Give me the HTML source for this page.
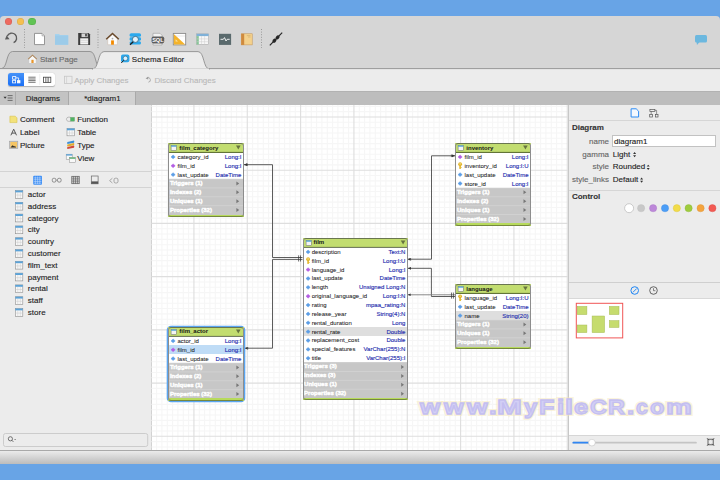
<!DOCTYPE html>
<html><head><meta charset="utf-8">
<style>
*{box-sizing:border-box;margin:0;padding:0}
html,body{width:720px;height:480px;overflow:hidden;background:#68a4e6;font-family:"Liberation Sans",sans-serif;color:#222}
.a{position:absolute}
#win{position:absolute;left:0;top:16px;width:720px;height:448px;background:#d6d6d6;border-radius:4px 4px 1px 1px;overflow:hidden}
.tl{position:absolute;width:7.4px;height:7.4px;border-radius:50%;box-shadow:inset 0 0 0 0.5px rgba(0,0,0,0.12)}
.sep{position:absolute;width:1px;border-left:1px dotted #999}
.t8{font-size:8px;white-space:nowrap;line-height:10px;-webkit-text-stroke:0.12px currentColor}
.tb{background:#fff;border-radius:3px}
.tb:after{content:"";position:absolute;left:0;top:0;right:0;bottom:0;border:0.8px solid #8d8d8d;border-top-color:#6a7650;border-bottom:1px solid #75883f;border-radius:3px}
.th{background:#c2dd70}
.tn{font-size:6px;font-weight:bold;color:#151515;white-space:nowrap}
.tr{font-size:6px;white-space:nowrap}
.fn{position:absolute;left:9.2px;top:0;color:#1a1a1a;-webkit-text-stroke:0.05px #1a1a1a}
.ty{position:absolute;right:2.3px;top:0;color:#2a33b0;-webkit-text-stroke:0.15px #2a33b0}
.tg{background:#c7c7c7;color:#fff;-webkit-text-stroke:0.4px #fff;font-size:6px;font-weight:bold;padding-left:1.6px;white-space:nowrap}
.tf{background:#b7da5c}
.wm{position:absolute;top:394.60px;font-size:21px;line-height:24px;font-weight:bold;white-space:nowrap;color:#d3cff6;-webkit-text-stroke:1.3px #c4bff0;transform-origin:0 0}
.wmh{color:transparent;-webkit-text-stroke:4px rgba(248,232,180,0.45)}
</style></head><body>
<div id="win">
  <!-- traffic lights -->
  <div class="tl" style="left:4.6px;top:2.1px;background:#ee6a5f"></div>
  <div class="tl" style="left:16.5px;top:2.1px;background:#f5bf4f"></div>
  <div class="tl" style="left:28.3px;top:2.1px;background:#61c454"></div>
</div>

<svg class="a" style="left:0;top:0" width="720" height="70" viewBox="0 0 720 70">
 <!-- undo -->
 <path d="M7.2 36.2 A4.9 4.9 0 1 1 13.6 42.6" fill="none" stroke="#5c5c5c" stroke-width="1.4"/>
 <path d="M5 39.6 L9.6 39.2 L6.6 35.4 Z" fill="#5c5c5c"/>
 <!-- separators -->
 <line x1="24.5" y1="29" x2="24.5" y2="48" stroke="#8a8a8a" stroke-width="0.8" stroke-dasharray="1 1.6"/>
 <line x1="98" y1="29" x2="98" y2="48" stroke="#8a8a8a" stroke-width="0.8" stroke-dasharray="1 1.6"/>
 <line x1="261.5" y1="29" x2="261.5" y2="48" stroke="#8a8a8a" stroke-width="0.8" stroke-dasharray="1 1.6"/>
 <!-- new doc -->
 <path d="M34.5 33.4 H42 L44.5 35.9 V44.6 H34.5 Z" fill="#fff" stroke="#8c8c8c" stroke-width="0.9"/>
 <path d="M42 33.4 V35.9 H44.5" fill="#e0e0e0" stroke="#9a9a9a" stroke-width="0.6"/>
 <!-- folder -->
 <path d="M55 34 H59 L60 35 H68.2 V44.7 H55 Z" fill="#a6d3ee"/>
 <rect x="55" y="35.6" width="13.2" height="9.1" fill="#9ccbe9"/>
 <!-- floppy -->
 <path d="M78.2 33 H88.6 L90.1 34.5 V45 H78.2 Z" fill="#3b3b3b"/>
 <rect x="81.5" y="33.4" width="6.2" height="3.7" fill="#d4d4d4"/>
 <rect x="85.2" y="33.8" width="1.6" height="2.6" fill="#3b3b3b"/>
 <rect x="80.2" y="38.3" width="8" height="6.2" fill="#f4f4f4"/>
 <line x1="80.2" y1="40.3" x2="88.2" y2="40.3" stroke="#bbb" stroke-width="0.5"/>
 <line x1="80.2" y1="42.3" x2="88.2" y2="42.3" stroke="#bbb" stroke-width="0.5"/>
 <!-- house -->
 <path d="M107.7 38.6 V44.7 H117.4 V38.6 L112.5 34.4 Z" fill="#fbfbfb" stroke="#c8b9a8" stroke-width="0.5"/>
 <path d="M106.2 39.2 L112.5 33.4 L118.8 39.2" fill="none" stroke="#6a4a2c" stroke-width="1.5"/>
 <circle cx="112.5" cy="38.6" r="0.9" fill="#aaa"/>
 <rect x="111.1" y="40.4" width="2.8" height="4.3" fill="#f28a00"/>
 <!-- db search -->
 <rect x="129.6" y="33.2" width="11.4" height="3.6" rx="1.6" fill="#2aa9ee"/>
 <rect x="129.6" y="37.3" width="11.4" height="3.4" rx="1.4" fill="#2aa9ee"/>
 <rect x="129.6" y="41.2" width="11.4" height="3.4" rx="1.6" fill="#2aa9ee"/>
 <circle cx="135.4" cy="39.4" r="3" fill="#e4f3fc" stroke="#27536e" stroke-width="0.7"/>
 <line x1="133.2" y1="41.7" x2="130" y2="44.8" stroke="#1e1e1e" stroke-width="1.3"/>
 <!-- sql -->
 <path d="M153 33.3 H160 L162 35.3 V45 H153 Z" fill="#f2f2f2" stroke="#9a9a9a" stroke-width="0.6"/>
 <rect x="151.6" y="36.4" width="12.6" height="7" rx="1.8" fill="#5d5d5d"/>
 <text x="157.9" y="42.2" font-size="5.6" font-family="Liberation Sans" font-weight="bold" fill="#fff" text-anchor="middle">SQL</text>
 <!-- ruler -->
 <rect x="173.3" y="33.4" width="12.4" height="11.5" fill="#fff" stroke="#8a8a8a" stroke-width="0.9"/>
 <line x1="174" y1="36" x2="185" y2="36" stroke="#ccc" stroke-width="0.5"/>
 <path d="M173.8 34 L185.2 44.4 H173.8 Z" fill="#f4b32a"/>
 <path d="M175.6 39.2 L178 41.6 H175.6 Z" fill="#fbe3a8"/>
 <!-- table -->
 <rect x="196.6" y="33.8" width="12" height="10.7" fill="#f7f7f7" stroke="#a9a9a9" stroke-width="0.6"/>
 <rect x="196.6" y="33.8" width="12" height="2.3" fill="#7fb1d8"/>
 <rect x="196.6" y="36.1" width="2.2" height="8.4" fill="#86c597"/>
 <path d="M201.5 36 V44.5 M204.6 36 V44.5 M196.6 38.9 H208.6 M196.6 41.7 H208.6" stroke="#cfcfcf" stroke-width="0.5"/>
 <!-- monitor -->
 <rect x="219" y="33.8" width="12.1" height="11.1" fill="#5a6a6d"/>
 <path d="M220.5 39.3 H223.3 L224.5 37.6 L226 41 L227.2 39.3 H229.7" fill="none" stroke="#fff" stroke-width="0.9"/>
 <!-- book -->
 <rect x="241.2" y="33.8" width="11" height="11.1" fill="#f4d18c" stroke="#c09050" stroke-width="0.5"/>
 <rect x="241.2" y="33.8" width="3" height="11.1" fill="#cf8a3e"/>
 <path d="M246.8 35.6 H250.5 M248 37 H250.5" stroke="#c8a060" stroke-width="0.5"/>
 <!-- plug -->
 <line x1="269.8" y1="45.4" x2="282.2" y2="32.6" stroke="#262626" stroke-width="1.2"/>
 <ellipse cx="274.4" cy="40.7" rx="2.2" ry="1.7" transform="rotate(-45 274.4 40.7)" fill="#262626"/>
 <ellipse cx="277.6" cy="37.4" rx="2.2" ry="1.7" transform="rotate(-45 277.6 37.4)" fill="#262626"/>
 <!-- chat -->
 <rect x="695" y="34.9" width="12" height="7.6" rx="1.5" fill="#6cb8df"/>
 <path d="M696.5 42 L697 45 L699.5 42 Z" fill="#6cb8df"/>
</svg>
<!-- tab row (absolute page coords) -->
<div class="a" style="left:0;top:69px;width:720px;height:22px;background:#ececec"></div>
<svg class="a" style="left:0;top:46px" width="720" height="24" viewBox="0 46 720 24">
 <path d="M0 68.5 H1.5 C7.5 68.5 6 51.5 12.5 51.5 H90 C96.5 51.5 95 68.5 101 68.5 Z" fill="#cbcbcb" stroke="#8f8f8f" stroke-width="0.9"/>
 <path d="M0 68.6 H720" stroke="#9a9a9a" stroke-width="1"/>
 <path d="M92.5 69 C99 69 97.5 51.6 104 51.6 H198 C204.5 51.6 203 69 209.5 69 Z" fill="#ececec" stroke="#8f8f8f" stroke-width="0.9"/>
 <rect x="93" y="68.5" width="116" height="2" fill="#ececec"/>
 <!-- house small -->
 <path d="M29.2 58.6 V63 H35.8 V58.6 L32.5 55.8 Z" fill="#f8f8f8"/>
 <path d="M28.2 59.2 L32.5 55.2 L36.8 59.2" fill="none" stroke="#b08a60" stroke-width="1.1"/>
 <rect x="31.4" y="59.8" width="2.2" height="3.2" fill="#e8962a"/>
 <!-- schema editor icon -->
 <rect x="121" y="54.6" width="8.4" height="7.6" rx="1.8" fill="#2ba7ea"/>
 <circle cx="125.4" cy="58.4" r="2.3" fill="#dff1fb" stroke="#1d5f86" stroke-width="0.6"/>
 <line x1="123.7" y1="60.2" x2="121.3" y2="63" stroke="#222" stroke-width="1"/>
</svg>
<div class="a t8" style="left:40px;top:55px;color:#6a6a6a">Start Page</div>
<div class="a t8" style="left:131.8px;top:55px;color:#222">Schema Editor</div>
<!-- row2 -->
<div class="a" style="left:8.1px;top:73.4px;width:47px;height:12.3px;border-radius:2.5px;background:#fff;box-shadow:0 0.5px 1px rgba(0,0,0,0.25)"></div>
<div class="a" style="left:8.1px;top:73.4px;width:16px;height:12.3px;border-radius:2.5px 0 0 2.5px;background:linear-gradient(#4592f8,#1a6ff5)"></div>
<svg class="a" style="left:0;top:70px" width="300" height="20" viewBox="0 70 300 20">
 <g fill="none" stroke="#fff" stroke-width="0.8">
  <rect x="12.6" y="76.6" width="3.2" height="2.6"/>
  <rect x="12.6" y="80.3" width="3" height="2.6"/>
  <path d="M15.8 77.9 H18.6 V80.4"/>
  <rect x="17.4" y="80.6" width="2.6" height="2.3" fill="#fff"/>
 </g>
 <path d="M28.3 77.2 H35.6 M28.3 79 H35.6 M28.3 80.6 H35.6 M28.3 82.3 H35.6" stroke="#666" stroke-width="0.9"/>
 <line x1="39.8" y1="74" x2="39.8" y2="85" stroke="#e2e2e2" stroke-width="0.6"/>
 <rect x="43.4" y="77.2" width="7.4" height="5.2" fill="none" stroke="#444" stroke-width="0.8"/>
 <path d="M45.6 77.2 V82.4 M47.1 77.2 V82.4 M48.6 77.2 V82.4" stroke="#444" stroke-width="0.6"/>
 <!-- apply icon -->
 <rect x="64.6" y="76.2" width="7.4" height="7.4" fill="none" stroke="#c2c2c2" stroke-width="0.7"/>
 <path d="M66.6 76.2 V83.6" stroke="#c8c8c8" stroke-width="0.6"/>
 <!-- discard icon -->
 <path d="M147.2 77.8 A2.3 2.3 0 1 1 148.4 82.2" fill="none" stroke="#9d9d9d" stroke-width="0.8"/>
 <path d="M145.6 78.4 L148.2 76.6 L148.2 79.6 Z" fill="#9d9d9d"/>
</svg>
<div class="a t8" style="left:74.2px;top:76px;color:#b8b8b8">Apply Changes</div>
<div class="a t8" style="left:154.4px;top:76px;color:#b8b8b8">Discard Changes</div>
<!-- gray bar -->
<div class="a" style="left:0;top:91px;width:720px;height:14px;background:#bdbdbd;border-top:1px solid #b2b2b2"></div>
<div class="a" style="left:0;top:91px;width:16px;height:14px;background:#c4c4c4;border-top:1px solid #b2b2b2;border-right:1px solid #ababab"></div>
<div class="a" style="left:16px;top:91px;width:52.5px;height:14px;background:#c3c3c3;border-top:1px solid #b2b2b2;border-right:1px solid #a9a9a9"></div>
<div class="a" style="left:68.5px;top:91px;width:67px;height:14px;background:#d2d2d2;border-top:1px solid #b8b8b8;border-right:1px solid #a9a9a9"></div>
<svg class="a" style="left:0;top:91px" width="16" height="14" viewBox="0 91 16 14">
 <path d="M3.5 96.8 H6.7 L5.1 98.8 Z" fill="#333"/>
 <path d="M7.6 95.6 H12.6 M7.6 98 H12.6 M7.6 100.4 H12.6" stroke="#555" stroke-width="0.8"/>
</svg>
<div class="a t8" style="left:25.8px;top:93.5px;color:#222">Diagrams</div>
<div class="a t8" style="left:84.2px;top:93.5px;color:#222">*diagram1</div>
<!-- left panel -->
<div class="a" style="left:0;top:105px;width:151px;height:345px;background:#ececec"></div>
<div class="a" style="left:0;top:171px;width:151px;height:1px;background:#d3d3d3"></div>
<div class="a" style="left:0;top:187px;width:151px;height:1px;background:#d3d3d3"></div>
<div class="a t8" style="left:19.9px;top:114.6px">Comment</div>
<div class="a t8" style="left:19.9px;top:127.6px">Label</div>
<div class="a t8" style="left:19.9px;top:140.6px">Picture</div>
<div class="a t8" style="left:77.2px;top:114.6px">Function</div>
<div class="a t8" style="left:77.2px;top:127.6px">Table</div>
<div class="a t8" style="left:77.2px;top:140.6px">Type</div>
<div class="a t8" style="left:77.2px;top:153.6px">View</div>
<div class="a t8" style="left:27.8px;top:189.9px;color:#222">actor</div>
<div class="a t8" style="left:27.8px;top:201.7px;color:#222">address</div>
<div class="a t8" style="left:27.8px;top:213.5px;color:#222">category</div>
<div class="a t8" style="left:27.8px;top:225.3px;color:#222">city</div>
<div class="a t8" style="left:27.8px;top:237.1px;color:#222">country</div>
<div class="a t8" style="left:27.8px;top:248.9px;color:#222">customer</div>
<div class="a t8" style="left:27.8px;top:260.7px;color:#222">film_text</div>
<div class="a t8" style="left:27.8px;top:272.5px;color:#222">payment</div>
<div class="a t8" style="left:27.8px;top:284.3px;color:#222">rental</div>
<div class="a t8" style="left:27.8px;top:296.1px;color:#222">staff</div>
<div class="a t8" style="left:27.8px;top:307.9px;color:#222">store</div>

<svg class="a" style="left:0;top:105px" width="151" height="345" viewBox="0 105 151 345">
 <!-- comment -->
 <path d="M9.9 116.2 H15.3 L17 117.9 V122.6 H9.9 Z" fill="#f3e27a" stroke="#d9c34a" stroke-width="0.6"/>
 <!-- label A -->
 <path d="M10.9 135.3 L13.7 129.2 L16.5 135.3 M11.9 133.1 H15.5" fill="none" stroke="#484848" stroke-width="0.9"/>
 <!-- picture -->
 <rect x="9.6" y="141.2" width="8.2" height="7.2" fill="#c9c9c9" stroke="#a0a0a0" stroke-width="0.6"/>
 <rect x="10.4" y="142" width="6.6" height="5.6" fill="#f5c564"/>
 <path d="M10.4 147.6 L12.6 145.2 L14.2 146.6 L15 146 L16.2 147.6 Z" fill="#2e2e2e"/>
 <!-- function -->
 <path d="M70.2 117.2 H68.2 Q66.8 117.2 66.4 119.2 Q66.8 121.3 68.2 121.3 H70.2" fill="none" stroke="#9a9a9a" stroke-width="0.6"/>
 <rect x="70.4" y="117.3" width="4.2" height="3.9" fill="#4fb563" stroke="#7a9a7a" stroke-width="0.4"/>
 <!-- table -->
 <rect x="67" y="128.4" width="7.6" height="7.4" fill="#f8f8f8" stroke="#8d8d8d" stroke-width="0.6"/>
 <rect x="67" y="128.4" width="7.6" height="1.9" fill="#5aa2d8"/>
 <path d="M69.5 130.3 V135.8 M72.1 130.3 V135.8 M67 133 H74.6" stroke="#c9c9c9" stroke-width="0.5"/>
 <!-- type -->
 <path d="M67.4 141.9 L74 140.6 Q74.6 141.6 74 142.8 L67.4 144.1 Q66.8 143 67.4 141.9 Z" fill="#3b8ed6"/>
 <path d="M67.4 144.4 L74 143.1 Q74.6 144.1 74 145.3 L67.4 146.6 Q66.8 145.5 67.4 144.4 Z" fill="#e0ad2e"/>
 <path d="M67.4 146.9 L74 145.6 Q74.6 146.6 74 147.8 L67.4 149.1 Q66.8 148 67.4 146.9 Z" fill="#d04a3c"/>
 <!-- view -->
 <rect x="66.2" y="154.2" width="6" height="5.2" fill="#f8f8f8" stroke="#8d8d8d" stroke-width="0.5"/>
 <rect x="66.2" y="154.2" width="6" height="1.4" fill="#5aa2d8"/>
 <rect x="69.4" y="157.4" width="6" height="5" fill="#f8f8f8" stroke="#8d8d8d" stroke-width="0.5"/>
 <rect x="69.4" y="157.4" width="6" height="1.4" fill="#5fb070"/>
 <!-- icons row -->
 <rect x="33.2" y="175.8" width="8.8" height="8.9" rx="1" fill="#3c8ef5"/>
 <path d="M35.4 176.5 V184 M37.6 176.5 V184 M39.8 176.5 V184 M33.8 177.9 H41.4 M33.8 179.7 H41.4 M33.8 181.5 H41.4 M33.8 183.2 H41.4" stroke="#cfe3fc" stroke-width="0.5"/>
 <rect x="52.3" y="178.3" width="3.6" height="3.8" rx="1.4" fill="none" stroke="#777" stroke-width="0.8"/>
 <rect x="57.5" y="178.3" width="3.6" height="3.8" rx="1.4" fill="none" stroke="#777" stroke-width="0.8"/>
 <line x1="55.9" y1="180.2" x2="57.5" y2="180.2" stroke="#777" stroke-width="0.6"/>
 <rect x="71.8" y="176.3" width="7.4" height="7.4" fill="none" stroke="#555" stroke-width="0.7"/>
 <path d="M73.6 176.3 V183.7 M75.5 176.3 V183.7 M77.4 176.3 V183.7 M71.8 178.2 H79.2 M71.8 180 H79.2 M71.8 181.8 H79.2" stroke="#555" stroke-width="0.6"/>
 <rect x="91.3" y="176" width="6.8" height="7.8" fill="none" stroke="#666" stroke-width="0.7"/>
 <rect x="91.3" y="181.4" width="6.8" height="2.4" fill="#555"/>
 <path d="M112.4 178.2 L109.6 180.6 L112.4 183" fill="none" stroke="#888" stroke-width="0.7"/>
 <rect x="114" y="178.2" width="4" height="4.8" rx="1.6" fill="none" stroke="#888" stroke-width="0.7"/>
 <rect x="15.3" y="190.5" width="7.5" height="7.8" fill="#f8f8f8" stroke="#8d8d8d" stroke-width="0.6"/><rect x="15.3" y="190.5" width="7.5" height="1.9" fill="#5aa2d8"/><path d="M17.8 192.4 V198.3 M20.3 192.4 V198.3 M15.3 195.1 H22.8" stroke="#c9c9c9" stroke-width="0.5"/>
<rect x="15.3" y="202.3" width="7.5" height="7.8" fill="#f8f8f8" stroke="#8d8d8d" stroke-width="0.6"/><rect x="15.3" y="202.3" width="7.5" height="1.9" fill="#5aa2d8"/><path d="M17.8 204.2 V210.1 M20.3 204.2 V210.1 M15.3 206.9 H22.8" stroke="#c9c9c9" stroke-width="0.5"/>
<rect x="15.3" y="214.1" width="7.5" height="7.8" fill="#f8f8f8" stroke="#8d8d8d" stroke-width="0.6"/><rect x="15.3" y="214.1" width="7.5" height="1.9" fill="#5aa2d8"/><path d="M17.8 216.0 V221.9 M20.3 216.0 V221.9 M15.3 218.7 H22.8" stroke="#c9c9c9" stroke-width="0.5"/>
<rect x="15.3" y="225.9" width="7.5" height="7.8" fill="#f8f8f8" stroke="#8d8d8d" stroke-width="0.6"/><rect x="15.3" y="225.9" width="7.5" height="1.9" fill="#5aa2d8"/><path d="M17.8 227.8 V233.7 M20.3 227.8 V233.7 M15.3 230.5 H22.8" stroke="#c9c9c9" stroke-width="0.5"/>
<rect x="15.3" y="237.7" width="7.5" height="7.8" fill="#f8f8f8" stroke="#8d8d8d" stroke-width="0.6"/><rect x="15.3" y="237.7" width="7.5" height="1.9" fill="#5aa2d8"/><path d="M17.8 239.6 V245.5 M20.3 239.6 V245.5 M15.3 242.3 H22.8" stroke="#c9c9c9" stroke-width="0.5"/>
<rect x="15.3" y="249.5" width="7.5" height="7.8" fill="#f8f8f8" stroke="#8d8d8d" stroke-width="0.6"/><rect x="15.3" y="249.5" width="7.5" height="1.9" fill="#5aa2d8"/><path d="M17.8 251.4 V257.3 M20.3 251.4 V257.3 M15.3 254.1 H22.8" stroke="#c9c9c9" stroke-width="0.5"/>
<rect x="15.3" y="261.3" width="7.5" height="7.8" fill="#f8f8f8" stroke="#8d8d8d" stroke-width="0.6"/><rect x="15.3" y="261.3" width="7.5" height="1.9" fill="#5aa2d8"/><path d="M17.8 263.2 V269.1 M20.3 263.2 V269.1 M15.3 265.9 H22.8" stroke="#c9c9c9" stroke-width="0.5"/>
<rect x="15.3" y="273.1" width="7.5" height="7.8" fill="#f8f8f8" stroke="#8d8d8d" stroke-width="0.6"/><rect x="15.3" y="273.1" width="7.5" height="1.9" fill="#5aa2d8"/><path d="M17.8 275.0 V280.9 M20.3 275.0 V280.9 M15.3 277.7 H22.8" stroke="#c9c9c9" stroke-width="0.5"/>
<rect x="15.3" y="284.9" width="7.5" height="7.8" fill="#f8f8f8" stroke="#8d8d8d" stroke-width="0.6"/><rect x="15.3" y="284.9" width="7.5" height="1.9" fill="#5aa2d8"/><path d="M17.8 286.8 V292.7 M20.3 286.8 V292.7 M15.3 289.5 H22.8" stroke="#c9c9c9" stroke-width="0.5"/>
<rect x="15.3" y="296.7" width="7.5" height="7.8" fill="#f8f8f8" stroke="#8d8d8d" stroke-width="0.6"/><rect x="15.3" y="296.7" width="7.5" height="1.9" fill="#5aa2d8"/><path d="M17.8 298.6 V304.5 M20.3 298.6 V304.5 M15.3 301.3 H22.8" stroke="#c9c9c9" stroke-width="0.5"/>
<rect x="15.3" y="308.5" width="7.5" height="7.8" fill="#f8f8f8" stroke="#8d8d8d" stroke-width="0.6"/><rect x="15.3" y="308.5" width="7.5" height="1.9" fill="#5aa2d8"/><path d="M17.8 310.4 V316.3 M20.3 310.4 V316.3 M15.3 313.1 H22.8" stroke="#c9c9c9" stroke-width="0.5"/>

 <!-- search field -->
 <rect x="3.5" y="433.5" width="144.2" height="13" rx="2" fill="#ececec" stroke="#c4c4c4" stroke-width="0.8"/>
 <circle cx="10.4" cy="438.8" r="2.1" fill="none" stroke="#555" stroke-width="0.8"/>
 <line x1="11.9" y1="440.3" x2="13.3" y2="441.8" stroke="#555" stroke-width="0.9"/>
 <path d="M14.2 439 H16 L15.1 440 Z" fill="#555"/>
</svg>
<!-- canvas -->
<div class="a" style="left:151px;top:105px;width:417px;height:345px;background:#fff;border-left:1px solid #d2d2d2"></div>
<!--GRID-->
<svg class="a" style="left:0;top:0" width="720" height="480" viewBox="0 0 720 480"><g><line x1="156.60" y1="105" x2="156.60" y2="450" stroke="#f6f6f6" stroke-width="1.1"/><line x1="161.93" y1="105" x2="161.93" y2="450" stroke="#f6f6f6" stroke-width="1.1"/><line x1="167.27" y1="105" x2="167.27" y2="450" stroke="#f6f6f6" stroke-width="1.1"/><line x1="172.60" y1="105" x2="172.60" y2="450" stroke="#f6f6f6" stroke-width="1.1"/><line x1="177.93" y1="105" x2="177.93" y2="450" stroke="#f6f6f6" stroke-width="1.1"/><line x1="183.27" y1="105" x2="183.27" y2="450" stroke="#f6f6f6" stroke-width="1.1"/><line x1="188.60" y1="105" x2="188.60" y2="450" stroke="#f6f6f6" stroke-width="1.1"/><line x1="199.27" y1="105" x2="199.27" y2="450" stroke="#f6f6f6" stroke-width="1.1"/><line x1="204.60" y1="105" x2="204.60" y2="450" stroke="#f6f6f6" stroke-width="1.1"/><line x1="209.93" y1="105" x2="209.93" y2="450" stroke="#f6f6f6" stroke-width="1.1"/><line x1="215.27" y1="105" x2="215.27" y2="450" stroke="#f6f6f6" stroke-width="1.1"/><line x1="220.60" y1="105" x2="220.60" y2="450" stroke="#f6f6f6" stroke-width="1.1"/><line x1="225.93" y1="105" x2="225.93" y2="450" stroke="#f6f6f6" stroke-width="1.1"/><line x1="231.27" y1="105" x2="231.27" y2="450" stroke="#f6f6f6" stroke-width="1.1"/><line x1="236.60" y1="105" x2="236.60" y2="450" stroke="#f6f6f6" stroke-width="1.1"/><line x1="241.93" y1="105" x2="241.93" y2="450" stroke="#f6f6f6" stroke-width="1.1"/><line x1="252.60" y1="105" x2="252.60" y2="450" stroke="#f6f6f6" stroke-width="1.1"/><line x1="257.93" y1="105" x2="257.93" y2="450" stroke="#f6f6f6" stroke-width="1.1"/><line x1="263.27" y1="105" x2="263.27" y2="450" stroke="#f6f6f6" stroke-width="1.1"/><line x1="268.60" y1="105" x2="268.60" y2="450" stroke="#f6f6f6" stroke-width="1.1"/><line x1="273.93" y1="105" x2="273.93" y2="450" stroke="#f6f6f6" stroke-width="1.1"/><line x1="279.27" y1="105" x2="279.27" y2="450" stroke="#f6f6f6" stroke-width="1.1"/><line x1="284.60" y1="105" x2="284.60" y2="450" stroke="#f6f6f6" stroke-width="1.1"/><line x1="289.93" y1="105" x2="289.93" y2="450" stroke="#f6f6f6" stroke-width="1.1"/><line x1="295.27" y1="105" x2="295.27" y2="450" stroke="#f6f6f6" stroke-width="1.1"/><line x1="305.93" y1="105" x2="305.93" y2="450" stroke="#f6f6f6" stroke-width="1.1"/><line x1="311.27" y1="105" x2="311.27" y2="450" stroke="#f6f6f6" stroke-width="1.1"/><line x1="316.60" y1="105" x2="316.60" y2="450" stroke="#f6f6f6" stroke-width="1.1"/><line x1="321.93" y1="105" x2="321.93" y2="450" stroke="#f6f6f6" stroke-width="1.1"/><line x1="327.27" y1="105" x2="327.27" y2="450" stroke="#f6f6f6" stroke-width="1.1"/><line x1="332.60" y1="105" x2="332.60" y2="450" stroke="#f6f6f6" stroke-width="1.1"/><line x1="337.93" y1="105" x2="337.93" y2="450" stroke="#f6f6f6" stroke-width="1.1"/><line x1="343.27" y1="105" x2="343.27" y2="450" stroke="#f6f6f6" stroke-width="1.1"/><line x1="348.60" y1="105" x2="348.60" y2="450" stroke="#f6f6f6" stroke-width="1.1"/><line x1="359.27" y1="105" x2="359.27" y2="450" stroke="#f6f6f6" stroke-width="1.1"/><line x1="364.60" y1="105" x2="364.60" y2="450" stroke="#f6f6f6" stroke-width="1.1"/><line x1="369.93" y1="105" x2="369.93" y2="450" stroke="#f6f6f6" stroke-width="1.1"/><line x1="375.27" y1="105" x2="375.27" y2="450" stroke="#f6f6f6" stroke-width="1.1"/><line x1="380.60" y1="105" x2="380.60" y2="450" stroke="#f6f6f6" stroke-width="1.1"/><line x1="385.93" y1="105" x2="385.93" y2="450" stroke="#f6f6f6" stroke-width="1.1"/><line x1="391.27" y1="105" x2="391.27" y2="450" stroke="#f6f6f6" stroke-width="1.1"/><line x1="396.60" y1="105" x2="396.60" y2="450" stroke="#f6f6f6" stroke-width="1.1"/><line x1="401.93" y1="105" x2="401.93" y2="450" stroke="#f6f6f6" stroke-width="1.1"/><line x1="412.60" y1="105" x2="412.60" y2="450" stroke="#f6f6f6" stroke-width="1.1"/><line x1="417.93" y1="105" x2="417.93" y2="450" stroke="#f6f6f6" stroke-width="1.1"/><line x1="423.27" y1="105" x2="423.27" y2="450" stroke="#f6f6f6" stroke-width="1.1"/><line x1="428.60" y1="105" x2="428.60" y2="450" stroke="#f6f6f6" stroke-width="1.1"/><line x1="433.93" y1="105" x2="433.93" y2="450" stroke="#f6f6f6" stroke-width="1.1"/><line x1="439.27" y1="105" x2="439.27" y2="450" stroke="#f6f6f6" stroke-width="1.1"/><line x1="444.60" y1="105" x2="444.60" y2="450" stroke="#f6f6f6" stroke-width="1.1"/><line x1="449.93" y1="105" x2="449.93" y2="450" stroke="#f6f6f6" stroke-width="1.1"/><line x1="455.27" y1="105" x2="455.27" y2="450" stroke="#f6f6f6" stroke-width="1.1"/><line x1="465.93" y1="105" x2="465.93" y2="450" stroke="#f6f6f6" stroke-width="1.1"/><line x1="471.27" y1="105" x2="471.27" y2="450" stroke="#f6f6f6" stroke-width="1.1"/><line x1="476.60" y1="105" x2="476.60" y2="450" stroke="#f6f6f6" stroke-width="1.1"/><line x1="481.93" y1="105" x2="481.93" y2="450" stroke="#f6f6f6" stroke-width="1.1"/><line x1="487.27" y1="105" x2="487.27" y2="450" stroke="#f6f6f6" stroke-width="1.1"/><line x1="492.60" y1="105" x2="492.60" y2="450" stroke="#f6f6f6" stroke-width="1.1"/><line x1="497.93" y1="105" x2="497.93" y2="450" stroke="#f6f6f6" stroke-width="1.1"/><line x1="503.27" y1="105" x2="503.27" y2="450" stroke="#f6f6f6" stroke-width="1.1"/><line x1="508.60" y1="105" x2="508.60" y2="450" stroke="#f6f6f6" stroke-width="1.1"/><line x1="519.27" y1="105" x2="519.27" y2="450" stroke="#f6f6f6" stroke-width="1.1"/><line x1="524.60" y1="105" x2="524.60" y2="450" stroke="#f6f6f6" stroke-width="1.1"/><line x1="529.93" y1="105" x2="529.93" y2="450" stroke="#f6f6f6" stroke-width="1.1"/><line x1="535.27" y1="105" x2="535.27" y2="450" stroke="#f6f6f6" stroke-width="1.1"/><line x1="540.60" y1="105" x2="540.60" y2="450" stroke="#f6f6f6" stroke-width="1.1"/><line x1="545.93" y1="105" x2="545.93" y2="450" stroke="#f6f6f6" stroke-width="1.1"/><line x1="551.27" y1="105" x2="551.27" y2="450" stroke="#f6f6f6" stroke-width="1.1"/><line x1="556.60" y1="105" x2="556.60" y2="450" stroke="#f6f6f6" stroke-width="1.1"/><line x1="561.93" y1="105" x2="561.93" y2="450" stroke="#f6f6f6" stroke-width="1.1"/><line x1="151.5" y1="106.34" x2="568" y2="106.34" stroke="#f6f6f6" stroke-width="1.1"/><line x1="151.5" y1="111.66" x2="568" y2="111.66" stroke="#f6f6f6" stroke-width="1.1"/><line x1="151.5" y1="122.30" x2="568" y2="122.30" stroke="#f6f6f6" stroke-width="1.1"/><line x1="151.5" y1="127.62" x2="568" y2="127.62" stroke="#f6f6f6" stroke-width="1.1"/><line x1="151.5" y1="132.95" x2="568" y2="132.95" stroke="#f6f6f6" stroke-width="1.1"/><line x1="151.5" y1="138.27" x2="568" y2="138.27" stroke="#f6f6f6" stroke-width="1.1"/><line x1="151.5" y1="143.59" x2="568" y2="143.59" stroke="#f6f6f6" stroke-width="1.1"/><line x1="151.5" y1="148.91" x2="568" y2="148.91" stroke="#f6f6f6" stroke-width="1.1"/><line x1="151.5" y1="154.23" x2="568" y2="154.23" stroke="#f6f6f6" stroke-width="1.1"/><line x1="151.5" y1="159.56" x2="568" y2="159.56" stroke="#f6f6f6" stroke-width="1.1"/><line x1="151.5" y1="164.88" x2="568" y2="164.88" stroke="#f6f6f6" stroke-width="1.1"/><line x1="151.5" y1="175.52" x2="568" y2="175.52" stroke="#f6f6f6" stroke-width="1.1"/><line x1="151.5" y1="180.84" x2="568" y2="180.84" stroke="#f6f6f6" stroke-width="1.1"/><line x1="151.5" y1="186.17" x2="568" y2="186.17" stroke="#f6f6f6" stroke-width="1.1"/><line x1="151.5" y1="191.49" x2="568" y2="191.49" stroke="#f6f6f6" stroke-width="1.1"/><line x1="151.5" y1="196.81" x2="568" y2="196.81" stroke="#f6f6f6" stroke-width="1.1"/><line x1="151.5" y1="202.13" x2="568" y2="202.13" stroke="#f6f6f6" stroke-width="1.1"/><line x1="151.5" y1="207.45" x2="568" y2="207.45" stroke="#f6f6f6" stroke-width="1.1"/><line x1="151.5" y1="212.78" x2="568" y2="212.78" stroke="#f6f6f6" stroke-width="1.1"/><line x1="151.5" y1="218.10" x2="568" y2="218.10" stroke="#f6f6f6" stroke-width="1.1"/><line x1="151.5" y1="228.74" x2="568" y2="228.74" stroke="#f6f6f6" stroke-width="1.1"/><line x1="151.5" y1="234.06" x2="568" y2="234.06" stroke="#f6f6f6" stroke-width="1.1"/><line x1="151.5" y1="239.39" x2="568" y2="239.39" stroke="#f6f6f6" stroke-width="1.1"/><line x1="151.5" y1="244.71" x2="568" y2="244.71" stroke="#f6f6f6" stroke-width="1.1"/><line x1="151.5" y1="250.03" x2="568" y2="250.03" stroke="#f6f6f6" stroke-width="1.1"/><line x1="151.5" y1="255.35" x2="568" y2="255.35" stroke="#f6f6f6" stroke-width="1.1"/><line x1="151.5" y1="260.67" x2="568" y2="260.67" stroke="#f6f6f6" stroke-width="1.1"/><line x1="151.5" y1="266.00" x2="568" y2="266.00" stroke="#f6f6f6" stroke-width="1.1"/><line x1="151.5" y1="271.32" x2="568" y2="271.32" stroke="#f6f6f6" stroke-width="1.1"/><line x1="151.5" y1="281.96" x2="568" y2="281.96" stroke="#f6f6f6" stroke-width="1.1"/><line x1="151.5" y1="287.28" x2="568" y2="287.28" stroke="#f6f6f6" stroke-width="1.1"/><line x1="151.5" y1="292.61" x2="568" y2="292.61" stroke="#f6f6f6" stroke-width="1.1"/><line x1="151.5" y1="297.93" x2="568" y2="297.93" stroke="#f6f6f6" stroke-width="1.1"/><line x1="151.5" y1="303.25" x2="568" y2="303.25" stroke="#f6f6f6" stroke-width="1.1"/><line x1="151.5" y1="308.57" x2="568" y2="308.57" stroke="#f6f6f6" stroke-width="1.1"/><line x1="151.5" y1="313.89" x2="568" y2="313.89" stroke="#f6f6f6" stroke-width="1.1"/><line x1="151.5" y1="319.22" x2="568" y2="319.22" stroke="#f6f6f6" stroke-width="1.1"/><line x1="151.5" y1="324.54" x2="568" y2="324.54" stroke="#f6f6f6" stroke-width="1.1"/><line x1="151.5" y1="335.18" x2="568" y2="335.18" stroke="#f6f6f6" stroke-width="1.1"/><line x1="151.5" y1="340.50" x2="568" y2="340.50" stroke="#f6f6f6" stroke-width="1.1"/><line x1="151.5" y1="345.83" x2="568" y2="345.83" stroke="#f6f6f6" stroke-width="1.1"/><line x1="151.5" y1="351.15" x2="568" y2="351.15" stroke="#f6f6f6" stroke-width="1.1"/><line x1="151.5" y1="356.47" x2="568" y2="356.47" stroke="#f6f6f6" stroke-width="1.1"/><line x1="151.5" y1="361.79" x2="568" y2="361.79" stroke="#f6f6f6" stroke-width="1.1"/><line x1="151.5" y1="367.11" x2="568" y2="367.11" stroke="#f6f6f6" stroke-width="1.1"/><line x1="151.5" y1="372.44" x2="568" y2="372.44" stroke="#f6f6f6" stroke-width="1.1"/><line x1="151.5" y1="377.76" x2="568" y2="377.76" stroke="#f6f6f6" stroke-width="1.1"/><line x1="151.5" y1="388.40" x2="568" y2="388.40" stroke="#f6f6f6" stroke-width="1.1"/><line x1="151.5" y1="393.72" x2="568" y2="393.72" stroke="#f6f6f6" stroke-width="1.1"/><line x1="151.5" y1="399.05" x2="568" y2="399.05" stroke="#f6f6f6" stroke-width="1.1"/><line x1="151.5" y1="404.37" x2="568" y2="404.37" stroke="#f6f6f6" stroke-width="1.1"/><line x1="151.5" y1="409.69" x2="568" y2="409.69" stroke="#f6f6f6" stroke-width="1.1"/><line x1="151.5" y1="415.01" x2="568" y2="415.01" stroke="#f6f6f6" stroke-width="1.1"/><line x1="151.5" y1="420.33" x2="568" y2="420.33" stroke="#f6f6f6" stroke-width="1.1"/><line x1="151.5" y1="425.66" x2="568" y2="425.66" stroke="#f6f6f6" stroke-width="1.1"/><line x1="151.5" y1="430.98" x2="568" y2="430.98" stroke="#f6f6f6" stroke-width="1.1"/><line x1="151.5" y1="441.62" x2="568" y2="441.62" stroke="#f6f6f6" stroke-width="1.1"/><line x1="151.5" y1="446.94" x2="568" y2="446.94" stroke="#f6f6f6" stroke-width="1.1"/></g><g><line x1="193.93" y1="105" x2="193.93" y2="450" stroke="#dedede" stroke-width="1.1"/><line x1="247.27" y1="105" x2="247.27" y2="450" stroke="#dedede" stroke-width="1.1"/><line x1="300.60" y1="105" x2="300.60" y2="450" stroke="#dedede" stroke-width="1.1"/><line x1="353.93" y1="105" x2="353.93" y2="450" stroke="#dedede" stroke-width="1.1"/><line x1="407.27" y1="105" x2="407.27" y2="450" stroke="#dedede" stroke-width="1.1"/><line x1="460.60" y1="105" x2="460.60" y2="450" stroke="#dedede" stroke-width="1.1"/><line x1="513.93" y1="105" x2="513.93" y2="450" stroke="#dedede" stroke-width="1.1"/><line x1="567.27" y1="105" x2="567.27" y2="450" stroke="#dedede" stroke-width="1.1"/><line x1="151.5" y1="116.98" x2="568" y2="116.98" stroke="#dedede" stroke-width="1.1"/><line x1="151.5" y1="170.20" x2="568" y2="170.20" stroke="#dedede" stroke-width="1.1"/><line x1="151.5" y1="223.42" x2="568" y2="223.42" stroke="#dedede" stroke-width="1.1"/><line x1="151.5" y1="276.64" x2="568" y2="276.64" stroke="#dedede" stroke-width="1.1"/><line x1="151.5" y1="329.86" x2="568" y2="329.86" stroke="#dedede" stroke-width="1.1"/><line x1="151.5" y1="383.08" x2="568" y2="383.08" stroke="#dedede" stroke-width="1.1"/><line x1="151.5" y1="436.30" x2="568" y2="436.30" stroke="#dedede" stroke-width="1.1"/></g></svg>
<svg class="a" style="left:0;top:0" width="720" height="480" viewBox="0 0 720 480">
<g fill="none" stroke="#4a4a4a" stroke-width="0.9">
 <path d="M243.7 164.7 H272.5 V257.5 H302.5"/>
 <path d="M244.5 348.2 H272.5 V259.4 H302.5"/>
 <path d="M455.3 155.8 H431.5 V259.2 H407.7"/>
 <path d="M407.7 268.3 H431.4 V296.5 H455.3"/>
 <path d="M407.7 294.8 H455.3" stroke="#7a7a7a"/>
</g>
<g stroke="#333" stroke-width="0.7" fill="none">
 <path d="M298.6 255.4 V261.5 M300.5 255.4 V261.5"/>
 <path d="M451.5 292.6 V298.6 M453.4 292.6 V298.6"/>
 <path d="M247.3 163.4 V166 M247.7 347 V349.6 M410.6 258 V260.6 M451.4 154.5 V157.1"/>
</g>
<g fill="#333">
 <path d="M243.8 164.7 L247 163.3 V166.1 Z"/>
 <path d="M244.8 348.2 L247.4 346.9 V349.5 Z"/>
 <path d="M407.8 259.2 L410.2 258 V260.4 Z"/>
 <path d="M407.8 268.3 L411 266.9 V269.7 Z"/>
 <path d="M407.8 294.8 L410.6 293.5 V296.1 Z"/>
 <path d="M455.2 155.8 L452 154.4 V157.2 Z"/>
</g>
</svg>
<!--/GRID-->
<!--TABLES-->
<div class="a tb" style="left:168.30px;top:143.20px;width:75.40px;height:74.02px;">
<div class="a th" style="left:0;top:0;width:100%;height:9.50px"></div>
<div class="a tn" style="left:11px;top:0.6px;line-height:9.50px">film_category</div>
<div class="a tr" style="left:0;top:9.50px;width:100%;height:8.86px;background:#fff;line-height:8.86px"><span class="fn" style="top:0.6px">category_id</span><span class="ty" style="top:0.6px">Long:I</span></div>
<div class="a tr" style="left:0;top:18.36px;width:100%;height:8.86px;background:#fff;line-height:8.86px"><span class="fn" style="top:0.6px">film_id</span><span class="ty" style="top:0.6px">Long:I</span></div>
<div class="a tr" style="left:0;top:27.22px;width:100%;height:8.86px;background:#fff;line-height:8.86px"><span class="fn" style="top:0.6px">last_update</span><span class="ty" style="top:0.6px">DateTime</span></div>
<div class="a tg" style="left:0;top:36.08px;width:100%;height:8.86px;line-height:9.36px">Triggers (1)</div>
<div class="a tg" style="left:0;top:44.94px;width:100%;height:8.86px;line-height:9.36px">Indexes (2)</div>
<div class="a tg" style="left:0;top:53.80px;width:100%;height:8.86px;line-height:9.36px">Uniques (1)</div>
<div class="a tg" style="left:0;top:62.66px;width:100%;height:8.86px;line-height:9.36px">Properties (32)</div>
<div class="a tf" style="left:0;top:71.52px;width:100%;height:2.50px"></div>
<svg class="a" style="left:0;top:0" width="75.40" height="74.02" viewBox="0 0 75.40 74.02"><rect x="3.1" y="2.5" width="5.2" height="5" fill="#f4f4f4" stroke="#6d6d6d" stroke-width="0.5"/><rect x="3.1" y="2.5" width="5.2" height="1.2" fill="#49a3d8"/><path d="M68.00 2.5 H72.60 L70.30 6.4 Z" fill="#66733f"/><line x1="0" y1="9.40" x2="75.40" y2="9.40" stroke="#3c4a22" stroke-width="0.8"/><path d="M3.00 13.93 L5.10 12.03 L7.20 13.93 L5.10 15.83 Z" fill="#5b9de6" stroke="#5b9de6" stroke-width="0.5" stroke-linejoin="round"/><path d="M3.00 22.79 L5.10 20.89 L7.20 22.79 L5.10 24.69 Z" fill="#b35de3" stroke="#b35de3" stroke-width="0.5" stroke-linejoin="round"/><path d="M3.00 31.65 L5.10 29.75 L7.20 31.65 L5.10 33.55 Z" fill="#5b9de6" stroke="#5b9de6" stroke-width="0.5" stroke-linejoin="round"/><line x1="0" y1="36.08" x2="75.40" y2="36.08" stroke="#d6d6d6" stroke-width="0.6"/><path d="M68.40 38.51 L71.20 40.51 L68.40 42.51 Z" fill="#777"/><line x1="0" y1="44.94" x2="75.40" y2="44.94" stroke="#d6d6d6" stroke-width="0.6"/><path d="M68.40 47.37 L71.20 49.37 L68.40 51.37 Z" fill="#777"/><line x1="0" y1="53.80" x2="75.40" y2="53.80" stroke="#d6d6d6" stroke-width="0.6"/><path d="M68.40 56.23 L71.20 58.23 L68.40 60.23 Z" fill="#777"/><line x1="0" y1="62.66" x2="75.40" y2="62.66" stroke="#d6d6d6" stroke-width="0.6"/><path d="M68.40 65.09 L71.20 67.09 L68.40 69.09 Z" fill="#777"/></svg>
</div>
<div class="a tb" style="left:168.30px;top:326.90px;width:75.40px;height:74.02px;box-shadow:0 0 0 1.3px #5aa5f0;">
<div class="a th" style="left:0;top:0;width:100%;height:9.50px"></div>
<div class="a tn" style="left:11px;top:0.6px;line-height:9.50px">film_actor</div>
<div class="a tr" style="left:0;top:9.50px;width:100%;height:8.86px;background:#fff;line-height:8.86px"><span class="fn" style="top:0.6px">actor_id</span><span class="ty" style="top:0.6px">Long:I</span></div>
<div class="a tr" style="left:0;top:18.36px;width:100%;height:8.86px;background:#bfdcf6;line-height:8.86px"><span class="fn" style="top:0.6px">film_id</span><span class="ty" style="top:0.6px">Long:I</span></div>
<div class="a tr" style="left:0;top:27.22px;width:100%;height:8.86px;background:#fff;line-height:8.86px"><span class="fn" style="top:0.6px">last_update</span><span class="ty" style="top:0.6px">DateTime</span></div>
<div class="a tg" style="left:0;top:36.08px;width:100%;height:8.86px;line-height:9.36px">Triggers (1)</div>
<div class="a tg" style="left:0;top:44.94px;width:100%;height:8.86px;line-height:9.36px">Indexes (2)</div>
<div class="a tg" style="left:0;top:53.80px;width:100%;height:8.86px;line-height:9.36px">Uniques (1)</div>
<div class="a tg" style="left:0;top:62.66px;width:100%;height:8.86px;line-height:9.36px">Properties (32)</div>
<div class="a tf" style="left:0;top:71.52px;width:100%;height:2.50px"></div>
<svg class="a" style="left:0;top:0" width="75.40" height="74.02" viewBox="0 0 75.40 74.02"><rect x="3.1" y="2.5" width="5.2" height="5" fill="#f4f4f4" stroke="#6d6d6d" stroke-width="0.5"/><rect x="3.1" y="2.5" width="5.2" height="1.2" fill="#49a3d8"/><path d="M68.00 2.5 H72.60 L70.30 6.4 Z" fill="#66733f"/><line x1="0" y1="9.40" x2="75.40" y2="9.40" stroke="#3c4a22" stroke-width="0.8"/><path d="M3.00 13.93 L5.10 12.03 L7.20 13.93 L5.10 15.83 Z" fill="#5b9de6" stroke="#5b9de6" stroke-width="0.5" stroke-linejoin="round"/><path d="M3.00 22.79 L5.10 20.89 L7.20 22.79 L5.10 24.69 Z" fill="#b35de3" stroke="#b35de3" stroke-width="0.5" stroke-linejoin="round"/><path d="M3.00 31.65 L5.10 29.75 L7.20 31.65 L5.10 33.55 Z" fill="#5b9de6" stroke="#5b9de6" stroke-width="0.5" stroke-linejoin="round"/><line x1="0" y1="36.08" x2="75.40" y2="36.08" stroke="#d6d6d6" stroke-width="0.6"/><path d="M68.40 38.51 L71.20 40.51 L68.40 42.51 Z" fill="#777"/><line x1="0" y1="44.94" x2="75.40" y2="44.94" stroke="#d6d6d6" stroke-width="0.6"/><path d="M68.40 47.37 L71.20 49.37 L68.40 51.37 Z" fill="#777"/><line x1="0" y1="53.80" x2="75.40" y2="53.80" stroke="#d6d6d6" stroke-width="0.6"/><path d="M68.40 56.23 L71.20 58.23 L68.40 60.23 Z" fill="#777"/><line x1="0" y1="62.66" x2="75.40" y2="62.66" stroke="#d6d6d6" stroke-width="0.6"/><path d="M68.40 65.09 L71.20 67.09 L68.40 69.09 Z" fill="#777"/></svg>
</div>
<div class="a tb" style="left:302.50px;top:237.80px;width:105.20px;height:162.62px;">
<div class="a th" style="left:0;top:0;width:100%;height:9.50px"></div>
<div class="a tn" style="left:11px;top:0.6px;line-height:9.50px">film</div>
<div class="a tr" style="left:0;top:9.50px;width:100%;height:8.86px;background:#fff;line-height:8.86px"><span class="fn" style="top:0.6px">description</span><span class="ty" style="top:0.6px">Text:N</span></div>
<div class="a tr" style="left:0;top:18.36px;width:100%;height:8.86px;background:#fff;line-height:8.86px"><span class="fn" style="top:0.6px">film_id</span><span class="ty" style="top:0.6px">Long:I:U</span></div>
<div class="a tr" style="left:0;top:27.22px;width:100%;height:8.86px;background:#fff;line-height:8.86px"><span class="fn" style="top:0.6px">language_id</span><span class="ty" style="top:0.6px">Long:I</span></div>
<div class="a tr" style="left:0;top:36.08px;width:100%;height:8.86px;background:#fff;line-height:8.86px"><span class="fn" style="top:0.6px">last_update</span><span class="ty" style="top:0.6px">DateTime</span></div>
<div class="a tr" style="left:0;top:44.94px;width:100%;height:8.86px;background:#fff;line-height:8.86px"><span class="fn" style="top:0.6px">length</span><span class="ty" style="top:0.6px">Unsigned Long:N</span></div>
<div class="a tr" style="left:0;top:53.80px;width:100%;height:8.86px;background:#fff;line-height:8.86px"><span class="fn" style="top:0.6px">original_language_id</span><span class="ty" style="top:0.6px">Long:I:N</span></div>
<div class="a tr" style="left:0;top:62.66px;width:100%;height:8.86px;background:#fff;line-height:8.86px"><span class="fn" style="top:0.6px">rating</span><span class="ty" style="top:0.6px">mpaa_rating:N</span></div>
<div class="a tr" style="left:0;top:71.52px;width:100%;height:8.86px;background:#fff;line-height:8.86px"><span class="fn" style="top:0.6px">release_year</span><span class="ty" style="top:0.6px">String(4):N</span></div>
<div class="a tr" style="left:0;top:80.38px;width:100%;height:8.86px;background:#fff;line-height:8.86px"><span class="fn" style="top:0.6px">rental_duration</span><span class="ty" style="top:0.6px">Long</span></div>
<div class="a tr" style="left:0;top:89.24px;width:100%;height:8.86px;background:#dedede;line-height:8.86px"><span class="fn" style="top:0.6px">rental_rate</span><span class="ty" style="top:0.6px">Double</span></div>
<div class="a tr" style="left:0;top:98.10px;width:100%;height:8.86px;background:#fff;line-height:8.86px"><span class="fn" style="top:0.6px">replacement_cost</span><span class="ty" style="top:0.6px">Double</span></div>
<div class="a tr" style="left:0;top:106.96px;width:100%;height:8.86px;background:#fff;line-height:8.86px"><span class="fn" style="top:0.6px">special_features</span><span class="ty" style="top:0.6px">VarChar(255):N</span></div>
<div class="a tr" style="left:0;top:115.82px;width:100%;height:8.86px;background:#fff;line-height:8.86px"><span class="fn" style="top:0.6px">title</span><span class="ty" style="top:0.6px">VarChar(255):I</span></div>
<div class="a tg" style="left:0;top:124.68px;width:100%;height:8.86px;line-height:9.36px">Triggers (3)</div>
<div class="a tg" style="left:0;top:133.54px;width:100%;height:8.86px;line-height:9.36px">Indexes (3)</div>
<div class="a tg" style="left:0;top:142.40px;width:100%;height:8.86px;line-height:9.36px">Uniques (1)</div>
<div class="a tg" style="left:0;top:151.26px;width:100%;height:8.86px;line-height:9.36px">Properties (32)</div>
<div class="a tf" style="left:0;top:160.12px;width:100%;height:2.50px"></div>
<svg class="a" style="left:0;top:0" width="105.20" height="162.62" viewBox="0 0 105.20 162.62"><rect x="3.1" y="2.5" width="5.2" height="5" fill="#f4f4f4" stroke="#6d6d6d" stroke-width="0.5"/><rect x="3.1" y="2.5" width="5.2" height="1.2" fill="#49a3d8"/><path d="M97.80 2.5 H102.40 L100.10 6.4 Z" fill="#66733f"/><line x1="0" y1="9.40" x2="105.20" y2="9.40" stroke="#3c4a22" stroke-width="0.8"/><path d="M3.00 13.93 L5.10 12.03 L7.20 13.93 L5.10 15.83 Z" fill="#5b9de6" stroke="#5b9de6" stroke-width="0.5" stroke-linejoin="round"/><circle cx="5.10" cy="21.19" r="1.9" fill="#e3b427"/><rect x="4.30" y="22.29" width="1.6" height="3.6" fill="#e3b427"/><rect x="5.70" y="24.09" width="1" height="0.8" fill="#e3b427"/><circle cx="5.10" cy="20.89" r="0.6" fill="#fff6c8"/><path d="M3.00 31.65 L5.10 29.75 L7.20 31.65 L5.10 33.55 Z" fill="#b35de3" stroke="#b35de3" stroke-width="0.5" stroke-linejoin="round"/><path d="M3.00 40.51 L5.10 38.61 L7.20 40.51 L5.10 42.41 Z" fill="#5b9de6" stroke="#5b9de6" stroke-width="0.5" stroke-linejoin="round"/><path d="M3.00 49.37 L5.10 47.47 L7.20 49.37 L5.10 51.27 Z" fill="#5b9de6" stroke="#5b9de6" stroke-width="0.5" stroke-linejoin="round"/><path d="M3.00 58.23 L5.10 56.33 L7.20 58.23 L5.10 60.13 Z" fill="#b35de3" stroke="#b35de3" stroke-width="0.5" stroke-linejoin="round"/><path d="M3.00 67.09 L5.10 65.19 L7.20 67.09 L5.10 68.99 Z" fill="#5b9de6" stroke="#5b9de6" stroke-width="0.5" stroke-linejoin="round"/><path d="M3.00 75.95 L5.10 74.05 L7.20 75.95 L5.10 77.85 Z" fill="#5b9de6" stroke="#5b9de6" stroke-width="0.5" stroke-linejoin="round"/><path d="M3.00 84.81 L5.10 82.91 L7.20 84.81 L5.10 86.71 Z" fill="#5b9de6" stroke="#5b9de6" stroke-width="0.5" stroke-linejoin="round"/><path d="M3.00 93.67 L5.10 91.77 L7.20 93.67 L5.10 95.57 Z" fill="#5b9de6" stroke="#5b9de6" stroke-width="0.5" stroke-linejoin="round"/><path d="M3.00 102.53 L5.10 100.63 L7.20 102.53 L5.10 104.43 Z" fill="#5b9de6" stroke="#5b9de6" stroke-width="0.5" stroke-linejoin="round"/><path d="M3.00 111.39 L5.10 109.49 L7.20 111.39 L5.10 113.29 Z" fill="#5b9de6" stroke="#5b9de6" stroke-width="0.5" stroke-linejoin="round"/><path d="M3.00 120.25 L5.10 118.35 L7.20 120.25 L5.10 122.15 Z" fill="#5b9de6" stroke="#5b9de6" stroke-width="0.5" stroke-linejoin="round"/><line x1="0" y1="124.68" x2="105.20" y2="124.68" stroke="#d6d6d6" stroke-width="0.6"/><path d="M98.20 127.11 L101.00 129.11 L98.20 131.11 Z" fill="#777"/><line x1="0" y1="133.54" x2="105.20" y2="133.54" stroke="#d6d6d6" stroke-width="0.6"/><path d="M98.20 135.97 L101.00 137.97 L98.20 139.97 Z" fill="#777"/><line x1="0" y1="142.40" x2="105.20" y2="142.40" stroke="#d6d6d6" stroke-width="0.6"/><path d="M98.20 144.83 L101.00 146.83 L98.20 148.83 Z" fill="#777"/><line x1="0" y1="151.26" x2="105.20" y2="151.26" stroke="#d6d6d6" stroke-width="0.6"/><path d="M98.20 153.69 L101.00 155.69 L98.20 157.69 Z" fill="#777"/></svg>
</div>
<div class="a tb" style="left:455.30px;top:143.10px;width:75.50px;height:82.88px;">
<div class="a th" style="left:0;top:0;width:100%;height:9.50px"></div>
<div class="a tn" style="left:11px;top:0.6px;line-height:9.50px">inventory</div>
<div class="a tr" style="left:0;top:9.50px;width:100%;height:8.86px;background:#fff;line-height:8.86px"><span class="fn" style="top:0.6px">film_id</span><span class="ty" style="top:0.6px">Long:I</span></div>
<div class="a tr" style="left:0;top:18.36px;width:100%;height:8.86px;background:#fff;line-height:8.86px"><span class="fn" style="top:0.6px">inventory_id</span><span class="ty" style="top:0.6px">Long:I:U</span></div>
<div class="a tr" style="left:0;top:27.22px;width:100%;height:8.86px;background:#fff;line-height:8.86px"><span class="fn" style="top:0.6px">last_update</span><span class="ty" style="top:0.6px">DateTime</span></div>
<div class="a tr" style="left:0;top:36.08px;width:100%;height:8.86px;background:#fff;line-height:8.86px"><span class="fn" style="top:0.6px">store_id</span><span class="ty" style="top:0.6px">Long:I</span></div>
<div class="a tg" style="left:0;top:44.94px;width:100%;height:8.86px;line-height:9.36px">Triggers (1)</div>
<div class="a tg" style="left:0;top:53.80px;width:100%;height:8.86px;line-height:9.36px">Indexes (2)</div>
<div class="a tg" style="left:0;top:62.66px;width:100%;height:8.86px;line-height:9.36px">Uniques (1)</div>
<div class="a tg" style="left:0;top:71.52px;width:100%;height:8.86px;line-height:9.36px">Properties (32)</div>
<div class="a tf" style="left:0;top:80.38px;width:100%;height:2.50px"></div>
<svg class="a" style="left:0;top:0" width="75.50" height="82.88" viewBox="0 0 75.50 82.88"><rect x="3.1" y="2.5" width="5.2" height="5" fill="#f4f4f4" stroke="#6d6d6d" stroke-width="0.5"/><rect x="3.1" y="2.5" width="5.2" height="1.2" fill="#49a3d8"/><path d="M68.10 2.5 H72.70 L70.40 6.4 Z" fill="#66733f"/><line x1="0" y1="9.40" x2="75.50" y2="9.40" stroke="#3c4a22" stroke-width="0.8"/><path d="M3.00 13.93 L5.10 12.03 L7.20 13.93 L5.10 15.83 Z" fill="#b35de3" stroke="#b35de3" stroke-width="0.5" stroke-linejoin="round"/><circle cx="5.10" cy="21.19" r="1.9" fill="#e3b427"/><rect x="4.30" y="22.29" width="1.6" height="3.6" fill="#e3b427"/><rect x="5.70" y="24.09" width="1" height="0.8" fill="#e3b427"/><circle cx="5.10" cy="20.89" r="0.6" fill="#fff6c8"/><path d="M3.00 31.65 L5.10 29.75 L7.20 31.65 L5.10 33.55 Z" fill="#5b9de6" stroke="#5b9de6" stroke-width="0.5" stroke-linejoin="round"/><path d="M3.00 40.51 L5.10 38.61 L7.20 40.51 L5.10 42.41 Z" fill="#5b9de6" stroke="#5b9de6" stroke-width="0.5" stroke-linejoin="round"/><line x1="0" y1="44.94" x2="75.50" y2="44.94" stroke="#d6d6d6" stroke-width="0.6"/><path d="M68.50 47.37 L71.30 49.37 L68.50 51.37 Z" fill="#777"/><line x1="0" y1="53.80" x2="75.50" y2="53.80" stroke="#d6d6d6" stroke-width="0.6"/><path d="M68.50 56.23 L71.30 58.23 L68.50 60.23 Z" fill="#777"/><line x1="0" y1="62.66" x2="75.50" y2="62.66" stroke="#d6d6d6" stroke-width="0.6"/><path d="M68.50 65.09 L71.30 67.09 L68.50 69.09 Z" fill="#777"/><line x1="0" y1="71.52" x2="75.50" y2="71.52" stroke="#d6d6d6" stroke-width="0.6"/><path d="M68.50 73.95 L71.30 75.95 L68.50 77.95 Z" fill="#777"/></svg>
</div>
<div class="a tb" style="left:455.30px;top:284.10px;width:75.50px;height:65.16px;">
<div class="a th" style="left:0;top:0;width:100%;height:9.50px"></div>
<div class="a tn" style="left:11px;top:0.6px;line-height:9.50px">language</div>
<div class="a tr" style="left:0;top:9.50px;width:100%;height:8.86px;background:#fff;line-height:8.86px"><span class="fn" style="top:0.6px">language_id</span><span class="ty" style="top:0.6px">Long:I:U</span></div>
<div class="a tr" style="left:0;top:18.36px;width:100%;height:8.86px;background:#fff;line-height:8.86px"><span class="fn" style="top:0.6px">last_update</span><span class="ty" style="top:0.6px">DateTime</span></div>
<div class="a tr" style="left:0;top:27.22px;width:100%;height:8.86px;background:#dedede;line-height:8.86px"><span class="fn" style="top:0.6px">name</span><span class="ty" style="top:0.6px">String(20)</span></div>
<div class="a tg" style="left:0;top:36.08px;width:100%;height:8.86px;line-height:9.36px">Triggers (1)</div>
<div class="a tg" style="left:0;top:44.94px;width:100%;height:8.86px;line-height:9.36px">Uniques (1)</div>
<div class="a tg" style="left:0;top:53.80px;width:100%;height:8.86px;line-height:9.36px">Properties (32)</div>
<div class="a tf" style="left:0;top:62.66px;width:100%;height:2.50px"></div>
<svg class="a" style="left:0;top:0" width="75.50" height="65.16" viewBox="0 0 75.50 65.16"><rect x="3.1" y="2.5" width="5.2" height="5" fill="#f4f4f4" stroke="#6d6d6d" stroke-width="0.5"/><rect x="3.1" y="2.5" width="5.2" height="1.2" fill="#49a3d8"/><path d="M68.10 2.5 H72.70 L70.40 6.4 Z" fill="#66733f"/><line x1="0" y1="9.40" x2="75.50" y2="9.40" stroke="#3c4a22" stroke-width="0.8"/><circle cx="5.10" cy="12.33" r="1.9" fill="#e3b427"/><rect x="4.30" y="13.43" width="1.6" height="3.6" fill="#e3b427"/><rect x="5.70" y="15.23" width="1" height="0.8" fill="#e3b427"/><circle cx="5.10" cy="12.03" r="0.6" fill="#fff6c8"/><path d="M3.00 22.79 L5.10 20.89 L7.20 22.79 L5.10 24.69 Z" fill="#5b9de6" stroke="#5b9de6" stroke-width="0.5" stroke-linejoin="round"/><path d="M3.00 31.65 L5.10 29.75 L7.20 31.65 L5.10 33.55 Z" fill="#5b9de6" stroke="#5b9de6" stroke-width="0.5" stroke-linejoin="round"/><line x1="0" y1="36.08" x2="75.50" y2="36.08" stroke="#d6d6d6" stroke-width="0.6"/><path d="M68.50 38.51 L71.30 40.51 L68.50 42.51 Z" fill="#777"/><line x1="0" y1="44.94" x2="75.50" y2="44.94" stroke="#d6d6d6" stroke-width="0.6"/><path d="M68.50 47.37 L71.30 49.37 L68.50 51.37 Z" fill="#777"/><line x1="0" y1="53.80" x2="75.50" y2="53.80" stroke="#d6d6d6" stroke-width="0.6"/><path d="M68.50 56.23 L71.30 58.23 L68.50 60.23 Z" fill="#777"/></svg>
</div>
<!--/TABLES-->
<!-- right panel -->
<div class="a" style="left:568px;top:105px;width:152px;height:345px;background:#ececec;border-left:1px solid #c8c8c8"></div>
<div class="a" style="left:569px;top:120px;width:151px;height:1px;background:#d6d6d6"></div>
<div class="a t8" style="left:571.9px;top:123.2px;font-weight:bold;color:#333">Diagram</div>
<div class="a t8" style="left:540px;width:69px;text-align:right;top:136.5px;color:#666">name</div>
<div class="a" style="left:612.2px;top:135.3px;width:104px;height:11.5px;background:#fff;border:0.8px solid #c2c2c2"></div>
<div class="a t8" style="left:614px;top:136.5px;color:#222">diagram1</div>
<div class="a t8" style="left:540px;width:69px;text-align:right;top:149.5px;color:#666">gamma</div>
<div class="a t8" style="left:612.8px;top:149.5px;color:#222">Light</div>
<div class="a t8" style="left:540px;width:69px;text-align:right;top:162.3px;color:#666">style</div>
<div class="a t8" style="left:612.8px;top:162.3px;color:#222">Rounded</div>
<div class="a t8" style="left:540px;width:69px;text-align:right;top:175.2px;color:#666">style_links</div>
<div class="a t8" style="left:612.8px;top:175.2px;color:#222">Default</div>
<div class="a" style="left:569px;top:190px;width:151px;height:1px;background:#d6d6d6"></div>
<div class="a t8" style="left:571.9px;top:191.8px;font-weight:bold;color:#333">Control</div>
<div class="a" style="left:569px;top:282px;width:151px;height:1px;background:#cfcfcf"></div>
<div class="a" style="left:569px;top:298px;width:151px;height:137px;background:#fff;border-top:1px solid #d8d8d8"></div>
<div class="a" style="left:569px;top:435px;width:151px;height:1px;background:#d6d6d6"></div>
<svg class="a" style="left:568px;top:105px" width="152" height="345" viewBox="568 105 152 345">
 <!-- doc icon -->
 <path d="M631.1 108.8 H636.2 L638.6 111.2 V117 H631.1 Z" fill="#f4f8fe" stroke="#2d8cf4" stroke-width="1"/>
 <!-- structure icon -->
 <rect x="649.9" y="109.4" width="5" height="2" fill="none" stroke="#555" stroke-width="0.7"/>
 <path d="M651.2 111.4 V114.3 M654.9 110.4 H656.6 V114.3" fill="none" stroke="#555" stroke-width="0.6"/>
 <rect x="649.7" y="114.4" width="2.8" height="2.6" fill="none" stroke="#555" stroke-width="0.7"/>
 <rect x="655.4" y="114.4" width="2.6" height="2.6" fill="none" stroke="#555" stroke-width="0.7"/>
 <!-- select arrows -->
 <path d="M633.1 153.9 L634.6 152.0 L636.1 153.9 Z M633.1 155.3 L634.6 157.2 L636.1 155.3 Z" fill="#333"/>
 <path d="M646.7 166.6 L648.2 164.7 L649.7 166.6 Z M646.7 168.0 L648.2 169.9 L649.7 168.0 Z" fill="#333"/>
 <path d="M640.1 179.4 L641.6 177.5 L643.1 179.4 Z M640.1 180.8 L641.6 182.7 L643.1 180.8 Z" fill="#333"/>
 <!-- color circles -->
 <circle cx="629.1" cy="208.2" r="4.5" fill="#fff" stroke="#c4c4c4" stroke-width="0.9"/>
 <circle cx="641.1" cy="208.2" r="3.6" fill="#c8c8c8" stroke="#bdbdbd" stroke-width="0.4"/>
 <circle cx="653.1" cy="208.2" r="3.6" fill="#bd88d9" stroke="#a877c6" stroke-width="0.4"/>
 <circle cx="665" cy="208.2" r="3.6" fill="#4c9ef7" stroke="#3f8ce0" stroke-width="0.4"/>
 <circle cx="676.8" cy="208.2" r="3.6" fill="#f2dc4a" stroke="#d9c43c" stroke-width="0.4"/>
 <circle cx="688.6" cy="208.2" r="3.6" fill="#9fcc3e" stroke="#8ab534" stroke-width="0.4"/>
 <circle cx="700.6" cy="208.2" r="3.6" fill="#f4a43e" stroke="#dc9234" stroke-width="0.4"/>
 <circle cx="712.4" cy="208.2" r="3.6" fill="#f25a53" stroke="#d94c46" stroke-width="0.4"/>
 <!-- compass -->
 <circle cx="634.7" cy="290.5" r="3.8" fill="none" stroke="#1f86f5" stroke-width="1"/>
 <path d="M632.8 292.4 L635.2 290 L636.6 288.6 L634.2 291 Z" fill="#1f86f5" stroke="#1f86f5" stroke-width="0.6"/>
 <!-- clock -->
 <circle cx="653.5" cy="290.5" r="3.8" fill="none" stroke="#555" stroke-width="0.9"/>
 <path d="M653.5 288.2 V290.7 H655.4" fill="none" stroke="#555" stroke-width="0.7"/>
 <!-- minimap -->
 <rect x="576.3" y="303.3" width="46.4" height="34.6" fill="#fff" stroke="#f05555" stroke-width="1"/>
 <g fill="#c6dc6e" stroke="#a7bb58" stroke-width="0.5">
  <rect x="577.2" y="306.4" width="9.7" height="8.2"/>
  <rect x="577.2" y="325" width="9.7" height="7.6"/>
  <rect x="592.1" y="316" width="12.5" height="16.6"/>
  <rect x="609.3" y="306.4" width="9.7" height="8.2"/>
  <rect x="609.3" y="320.6" width="9.7" height="6.9"/>
 </g>
 <!-- slider -->
 <rect x="572.5" y="441.7" width="124.3" height="1.9" rx="0.9" fill="#c4c4c4"/>
 <rect x="572.5" y="441.7" width="19.4" height="1.9" rx="0.9" fill="#2f86f4"/>
 <circle cx="591.9" cy="442.8" r="3.5" fill="#c8c8c8" opacity="0.6"/><circle cx="591.9" cy="442.6" r="3.3" fill="#fff" stroke="#c6c6c6" stroke-width="0.5"/>
 <!-- fit icon -->
 <rect x="708" y="439.2" width="5.2" height="5.6" fill="none" stroke="#444" stroke-width="0.8"/>
 <path d="M707 438.2 L709 440.2 M714.2 438.2 L712.2 440.2 M707 445.8 L709 443.8 M714.2 445.8 L712.2 443.8" stroke="#444" stroke-width="0.8"/>
</svg>
<!-- watermark -->
<div class="wm wmh" style="left:419.82px;transform:scaleX(1.233)">w</div>
<div class="wm wmh" style="left:443.70px;transform:scaleX(1.200)">w</div>
<div class="wm wmh" style="left:466.55px;transform:scaleX(1.261)">w</div>
<div class="wm wmh" style="left:489.01px;transform:scaleX(1.318)">.</div>
<div class="wm wmh" style="left:497.04px;transform:scaleX(1.419)">M</div>
<div class="wm wmh" style="left:524.15px;transform:scaleX(1.132)">y</div>
<div class="wm wmh" style="left:539.40px;transform:scaleX(1.200)">F</div>
<div class="wm wmh" style="left:556.56px;transform:scaleX(1.247)">i</div>
<div class="wm wmh" style="left:565.06px;transform:scaleX(1.388)">l</div>
<div class="wm wmh" style="left:573.90px;transform:scaleX(1.209)">e</div>
<div class="wm wmh" style="left:589.72px;transform:scaleX(1.113)">C</div>
<div class="wm wmh" style="left:608.36px;transform:scaleX(1.120)">R</div>
<div class="wm wmh" style="left:627.06px;transform:scaleX(1.247)">.</div>
<div class="wm wmh" style="left:636.45px;transform:scaleX(1.009)">c</div>
<div class="wm wmh" style="left:650.02px;transform:scaleX(1.128)">o</div>
<div class="wm wmh" style="left:665.86px;transform:scaleX(1.386)">m</div>
<div class="wm" style="left:419.82px;transform:scaleX(1.233)">w</div>
<div class="wm" style="left:443.70px;transform:scaleX(1.200)">w</div>
<div class="wm" style="left:466.55px;transform:scaleX(1.261)">w</div>
<div class="wm" style="left:489.01px;transform:scaleX(1.318)">.</div>
<div class="wm" style="left:497.04px;transform:scaleX(1.419)">M</div>
<div class="wm" style="left:524.15px;transform:scaleX(1.132)">y</div>
<div class="wm" style="left:539.40px;transform:scaleX(1.200)">F</div>
<div class="wm" style="left:556.56px;transform:scaleX(1.247)">i</div>
<div class="wm" style="left:565.06px;transform:scaleX(1.388)">l</div>
<div class="wm" style="left:573.90px;transform:scaleX(1.209)">e</div>
<div class="wm" style="left:589.72px;transform:scaleX(1.113)">C</div>
<div class="wm" style="left:608.36px;transform:scaleX(1.120)">R</div>
<div class="wm" style="left:627.06px;transform:scaleX(1.247)">.</div>
<div class="wm" style="left:636.45px;transform:scaleX(1.009)">c</div>
<div class="wm" style="left:650.02px;transform:scaleX(1.128)">o</div>
<div class="wm" style="left:665.86px;transform:scaleX(1.386)">m</div>
<!-- bottom line and bar -->
<div class="a" style="left:0;top:450px;width:720px;height:1px;background:#a9a9a9"></div>
<div class="a" style="left:0;top:451px;width:720px;height:13px;background:linear-gradient(#ebebeb,#bcbcbc)"></div>
</body></html>
